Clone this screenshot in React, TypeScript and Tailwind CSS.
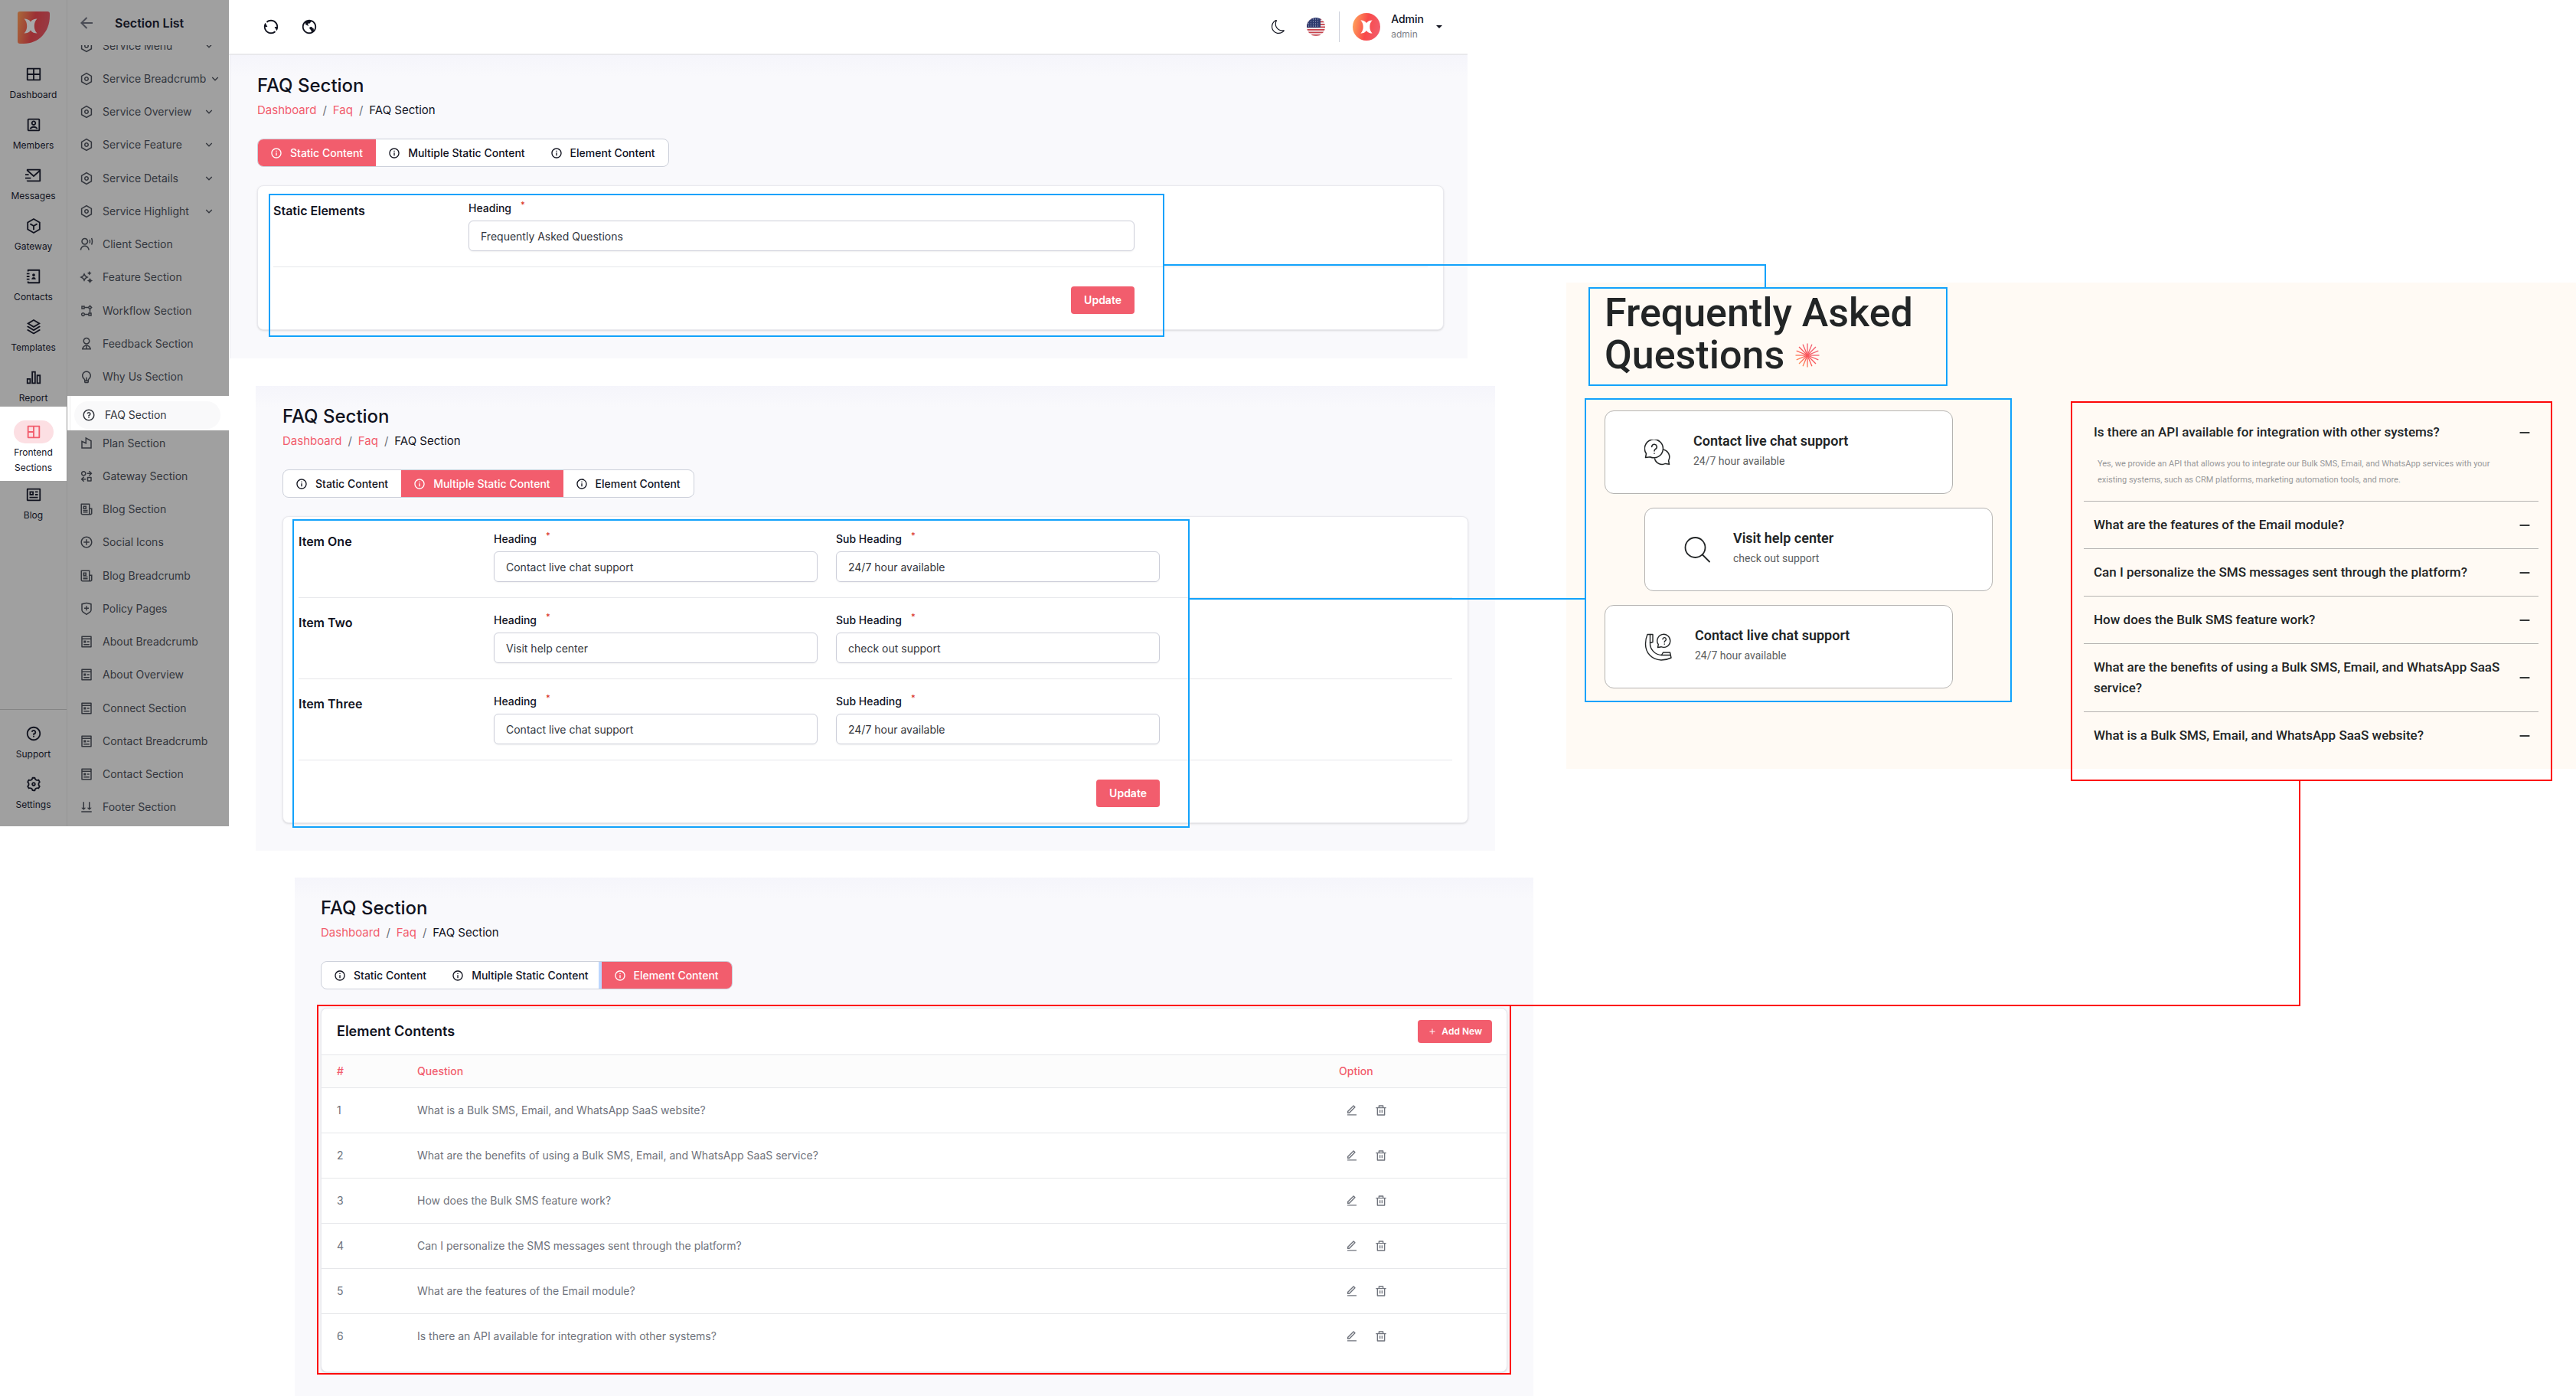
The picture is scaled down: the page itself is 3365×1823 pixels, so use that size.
import React from "react";
import type { IconType } from "react-icons";
import { BsMoon } from "react-icons/bs";
import {
  RiAccountBoxLine,
  RiAddCircleLine,
  RiAddLine,
  RiAlignBottom,
  RiArrowDownSLine,
  RiArrowLeftLine,
  RiBarChart2Line,
  RiBuilding3Line,
  RiContactsBook3Line,
  RiDeleteBinLine,
  RiEarthLine,
  RiEditLine,
  RiFlowChart,
  RiInformationLine,
  RiInstanceLine,
  RiLayout4Line,
  RiLayoutGridLine,
  RiLightbulbLine,
  RiMailSendLine,
  RiNewspaperLine,
  RiPagesLine,
  RiProfileLine,
  RiQuestionLine,
  RiRefreshLine,
  RiSettings3Line,
  RiSettingsLine,
  RiShieldCrossLine,
  RiSparkling2Line,
  RiStackLine,
  RiSubtractLine,
  RiSwap2Line,
  RiUser2Line,
  RiUserVoiceLine,
} from "react-icons/ri";
import clsx from "clsx";

type NavEntry = { label: string; icon: IconType; more?: boolean };

const railItems: NavEntry[] = [
  { label: "Dashboard", icon: RiLayoutGridLine },
  { label: "Members", icon: RiAccountBoxLine },
  { label: "Messages", icon: RiMailSendLine },
  { label: "Gateway", icon: RiInstanceLine },
  { label: "Contacts", icon: RiContactsBook3Line },
  { label: "Templates", icon: RiStackLine },
  { label: "Report", icon: RiBarChart2Line },
];

const sectionsAbove: NavEntry[] = [
  { label: "Service Menu", icon: RiSettingsLine, more: true },
  { label: "Service Breadcrumb", icon: RiSettingsLine, more: true },
  { label: "Service Overview", icon: RiSettingsLine, more: true },
  { label: "Service Feature", icon: RiSettingsLine, more: true },
  { label: "Service Details", icon: RiSettingsLine, more: true },
  { label: "Service Highlight", icon: RiSettingsLine, more: true },
  { label: "Client Section", icon: RiUserVoiceLine },
  { label: "Feature Section", icon: RiSparkling2Line },
  { label: "Workflow Section", icon: RiFlowChart },
  { label: "Feedback Section", icon: RiUser2Line },
  { label: "Why Us Section", icon: RiLightbulbLine },
];

const sectionsBelow: NavEntry[] = [
  { label: "Plan Section", icon: RiBuilding3Line },
  { label: "Gateway Section", icon: RiSwap2Line },
  { label: "Blog Section", icon: RiNewspaperLine },
  { label: "Social Icons", icon: RiAddCircleLine },
  { label: "Blog Breadcrumb", icon: RiNewspaperLine },
  { label: "Policy Pages", icon: RiShieldCrossLine },
  { label: "About Breadcrumb", icon: RiPagesLine },
  { label: "About Overview", icon: RiPagesLine },
  { label: "Connect Section", icon: RiPagesLine },
  { label: "Contact Breadcrumb", icon: RiPagesLine },
  { label: "Contact Section", icon: RiPagesLine },
  { label: "Footer Section", icon: RiAlignBottom },
];

const tabs = ["Static Content", "Multiple Static Content", "Element Content"];

const staticRows = [
  {
    title: "Static Elements",
    fields: [{ label: "Heading", value: "Frequently Asked Questions" }],
  },
];

const multipleRows = [
  {
    title: "Item One",
    fields: [
      { label: "Heading", value: "Contact live chat support" },
      { label: "Sub Heading", value: "24/7 hour available" },
    ],
  },
  {
    title: "Item Two",
    fields: [
      { label: "Heading", value: "Visit help center" },
      { label: "Sub Heading", value: "check out support" },
    ],
  },
  {
    title: "Item Three",
    fields: [
      { label: "Heading", value: "Contact live chat support" },
      { label: "Sub Heading", value: "24/7 hour available" },
    ],
  },
];

const questions = [
  "What is a Bulk SMS, Email, and WhatsApp SaaS website?",
  "What are the benefits of using a Bulk SMS, Email, and WhatsApp SaaS service?",
  "How does the Bulk SMS feature work?",
  "Can I personalize the SMS messages sent through the platform?",
  "What are the features of the Email module?",
  "Is there an API available for integration with other systems?",
];

const answer =
  "Yes, we provide an API that allows you to integrate our Bulk SMS, Email, and WhatsApp services with your existing systems, such as CRM platforms, marketing automation tools, and more.";

const XMark = () => (
  <path
    d="M-8.500 -9.500C-5 -9.500 -2 -8.500 0 -5.500C2 -8.500 5 -9.500 8.500 -9.500C6 -7 4.800 -4 4.800 0C4.800 4 6 7 8.500 9.500C5 9.500 2 8.500 0 5.500C-2 8.500 -5 9.500 -8.500 9.500C-6 7 -4.800 4 -4.800 0C-4.800 -4 -6 -7 -8.500 -9.500Z"
    fill="currentColor"
  />
);

const Logo = () => (
  <svg viewBox="0 0 42 42" className="size-[42px] text-[#a8a8a8]">
    <defs>
      <linearGradient id="logo" x1="0" x2="1" y1="0.3" y2="0.5">
        <stop offset="0" stopColor="#a8643a" />
        <stop offset="0.5" stopColor="#9c3034" />
        <stop offset="1" stopColor="#973b45" />
      </linearGradient>
    </defs>
    <path
      d="M3 0H39Q42 0 42 3V6C42 27 27 42 8 42H3Q0 42 0 39V3Q0 0 3 0Z"
      fill="url(#logo)"
    />
    <g transform="translate(17 19)">
      <XMark />
    </g>
  </svg>
);

const Avatar = () => (
  <svg viewBox="0 0 36 36" className="size-9 text-white">
    <defs>
      <linearGradient id="avatar" x1="0" x2="1" y1="0.4" y2="0.6">
        <stop offset="0" stopColor="#ff9f5a" />
        <stop offset="0.5" stopColor="#f94a4a" />
        <stop offset="1" stopColor="#f25d6d" />
      </linearGradient>
    </defs>
    <circle cx="18" cy="18" r="18" fill="url(#avatar)" />
    <g transform="translate(18 18) scale(.9)">
      <XMark />
    </g>
  </svg>
);

const Flag = () => (
  <svg viewBox="0 0 24 24" className="size-6">
    <clipPath id="flag">
      <circle cx="12" cy="12" r="12" />
    </clipPath>
    <g clipPath="url(#flag)">
      <rect width="24" height="24" fill="#f4f4f6" />
      {[1, 4.5, 8, 11.5, 15, 18.5, 22].map((y) => (
        <rect key={y} y={y} width="24" height="1.8" fill="#c8414b" />
      ))}
      <rect width="18" height="13" fill="#2e3a6e" />
      {[2, 5, 8, 11].map((y) => (
        <path
          key={y}
          d={`M2 ${y}H17`}
          stroke="#b9bed6"
          strokeWidth="1"
          strokeDasharray="1 2"
        />
      ))}
    </g>
  </svg>
);

const Burst = () => (
  <svg viewBox="-16 -16 32 32" className="size-8">
    <defs>
      <linearGradient
        id="burst"
        gradientUnits="userSpaceOnUse"
        x1="-14"
        x2="6"
        y1="12"
        y2="-6"
      >
        <stop offset="0" stopColor="#ff9a55" />
        <stop offset="0.6" stopColor="#fb5457" />
        <stop offset="1" stopColor="#f25d6d" />
      </linearGradient>
    </defs>
    {Array.from({ length: 16 }, (_, i) => {
      const a = (i * Math.PI) / 8;
      return (
        <line
          key={i}
          x1="0"
          y1="0"
          x2={15.5 * Math.cos(a)}
          y2={15.5 * Math.sin(a)}
          stroke="url(#burst)"
          strokeWidth="1.3"
        />
      );
    })}
  </svg>
);

const ChatIcon = () => (
  <svg
    viewBox="0 0 34 34"
    className="size-[34px]"
    fill="none"
    stroke="currentColor"
    strokeWidth="1.5"
    strokeLinecap="round"
    strokeLinejoin="round"
  >
    <path d="M1.500 23.500L2.500 18.500A12 12 0 1 1 7.500 22.700Z" />
    <path d="M9.700 9.500a3.300 3.300 0 1 1 4.800 3c-1.100.6-1.500 1.200-1.500 2.500M13 18v.3" />
    <path d="M25.500 13.200A10 10 0 0 1 31.600 27.500L32.500 32.300L27.500 31.400A10 10 0 0 1 13.500 25" />
  </svg>
);

const SearchIcon = () => (
  <svg
    viewBox="0 0 34 34"
    className="size-[34px]"
    fill="none"
    stroke="currentColor"
    strokeWidth="1.8"
    strokeLinecap="round"
  >
    <circle cx="14.500" cy="14" r="13" />
    <path d="M24 23.500L33 32.500" />
  </svg>
);

const PhoneIcon = () => (
  <svg
    viewBox="0 0 36 36"
    className="size-9"
    fill="none"
    stroke="currentColor"
    strokeWidth="1.4"
    strokeLinecap="round"
    strokeLinejoin="round"
  >
    <path d="M4 1.500H11V11.500L7.500 12.500C7 20 13 28 22.500 28.500L24.500 25H33.500L35 32C31 34 27 35 22 35C10 34.500 1.500 26 1.500 14C1.500 9 2.500 5 4 1.500Z" />
    <path d="M7.500 1.500V12.500M22.500 28.500L34 28.500" />
    <path d="M17.500 18.500L18.300 14.700A8.500 8.500 0 1 1 22 17.700Z" />
    <path d="M24 7.800a2.200 2.200 0 1 1 3.200 2c-.8.4-1 .8-1 1.700M26.200 14v.2" />
  </svg>
);

const RailItem = ({ item, active }: { item: NavEntry; active?: boolean }) => {
  const Icon = item.icon;
  return (
    <a href="#" className="flex flex-col items-center">
      <span
        className={clsx(
          "flex h-[30px] w-[52px] items-center justify-center rounded-full",
          active && "bg-[#fcdfe3] text-[#f25d6d]",
        )}
      >
        <Icon className="size-[22px]" />
      </span>
      <span className="mt-[2px] w-[70px] text-center text-xs leading-5">
        {item.label}
      </span>
    </a>
  );
};

const SectionItem = ({ item }: { item: NavEntry }) => {
  const Icon = item.icon;
  return (
    <a
      href="#"
      className="flex flex-1 items-center gap-3 pl-4 text-sm text-[#33363d]"
    >
      <Icon className="size-[18px] shrink-0" />
      <span className="flex items-center gap-1 whitespace-nowrap">
        <span className="min-w-[127px]">{item.label}</span>
        {item.more && <RiArrowDownSLine className="size-4 shrink-0" />}
      </span>
    </a>
  );
};

const Sidebar = () => (
  <aside className="flex min-h-[1079px] self-start text-[#11131f]">
    <nav className="flex w-[88px] flex-col border-r border-[#969696] bg-[#a0a0a0]">
      <div className="flex h-[82px] justify-center pt-[15px]">
        <Logo />
      </div>
      <div className="flex flex-col gap-[14px] pb-px">
        {railItems.map((item) => (
          <RailItem key={item.label} item={item} />
        ))}
      </div>
      <div className="bg-white pt-[18px] pb-[7px]">
        <RailItem
          active
          item={{ label: "Frontend Sections", icon: RiLayout4Line }}
        />
      </div>
      <div className="pt-[3px]">
        <RailItem item={{ label: "Blog", icon: RiProfileLine }} />
      </div>
      <div className="mt-auto flex flex-col gap-[14px] border-t border-[#858585] pt-4 pb-[18px]">
        <RailItem item={{ label: "Support", icon: RiQuestionLine }} />
        <RailItem item={{ label: "Settings", icon: RiSettings3Line }} />
      </div>
    </nav>
    <div className="flex flex-1 flex-col bg-[#a0a0a0]">
      <div className="flex h-[59px] items-center gap-[25px] pl-[13px]">
        <button type="button" aria-label="Back">
          <RiArrowLeftLine className="size-6 text-[#4a4c55]" />
        </button>
        <h2 className="text-base font-semibold">Section List</h2>
      </div>
      <div className="flex h-[458px] flex-col justify-end overflow-hidden pb-[3px]">
        <div className="flex h-[476px] shrink-0 flex-col">
          {sectionsAbove.map((item) => (
            <SectionItem key={item.label} item={item} />
          ))}
        </div>
      </div>
      <div className="bg-white pl-[3px]">
        <div className="border-l border-[#ececec] pt-[7px] pr-[11px] pb-[2px] pl-[5px]">
          <a
            href="#"
            className="flex h-9 items-center gap-3 rounded-full bg-[#f9f9fa] pl-[10px] text-sm text-[#33363d]"
          >
            <RiQuestionLine className="size-[18px]" />
            FAQ Section
          </a>
        </div>
      </div>
      <div className="-mt-[5px] flex flex-1 flex-col pb-[3px]">
        {sectionsBelow.map((item) => (
          <SectionItem key={item.label} item={item} />
        ))}
      </div>
    </div>
  </aside>
);

const Topbar = () => (
  <header className="mr-[129px] flex h-[72px] items-center border-b-2 border-[#e9e9ec] pr-[33px] pl-11 text-[#11131f]">
    <div className="flex items-center gap-7">
      <button type="button" aria-label="Refresh">
        <RiRefreshLine className="size-[22px]" />
      </button>
      <button type="button" aria-label="Visit site">
        <RiEarthLine className="size-[22px]" />
      </button>
    </div>
    <div className="ml-auto flex items-center">
      <button type="button" aria-label="Dark mode">
        <BsMoon className="size-[18px]" />
      </button>
      <button type="button" aria-label="Language" className="ml-7">
        <Flag />
      </button>
      <span className="ml-[18px] h-10 w-px bg-[#ccd0da]" />
      <button type="button" className="ml-[17px] flex items-center text-left">
        <Avatar />
        <span className="ml-[14px] flex flex-col">
          <span className="text-sm leading-5 font-medium">Admin</span>
          <span className="text-xs leading-5 text-[#7d8088]">admin</span>
        </span>
        <svg viewBox="0 0 8 4" className="ml-4 h-1 w-2" fill="currentColor">
          <path d="M0 0H8L4 4Z" />
        </svg>
      </button>
    </div>
  </header>
);

type PanelProps = {
  active: number;
  className?: string;
  children: React.ReactNode;
};

const Panel = ({ active, className, children }: PanelProps) => (
  <section
    className={clsx(
      "bg-[linear-gradient(#f5f5fb,#f9f9fc_28px)] pt-6 text-[#11131f]",
      className,
    )}
  >
    <h1 className="text-2xl font-medium">FAQ Section</h1>
    <nav className="mt-[6px] flex gap-2 text-[15px] leading-5">
      <a href="#" className="text-[#f25d6d]">
        Dashboard
      </a>
      <span className="text-[#6b7078]">/</span>
      <a href="#" className="text-[#f25d6d]">
        Faq
      </a>
      <span className="text-[#6b7078]">/</span>
      <span>FAQ Section</span>
    </nav>
    <div className="mt-[27px] flex h-[37px] w-fit overflow-hidden rounded-lg border border-[#ccd0da] bg-white text-sm font-medium">
      {tabs.map((tab, i) => (
        <button
          key={tab}
          type="button"
          className={clsx(
            "flex items-center gap-[10px] pr-[17px] pl-4",
            i === active && "bg-[#f25d6d] text-white",
            i === 2 && active === 2 && "shadow-[0_0_0_4px_#bcd7ff]",
          )}
        >
          <RiInformationLine className="size-4" />
          {tab}
        </button>
      ))}
    </div>
    {children}
  </section>
);

type FormCardProps = {
  id: string;
  rows: typeof staticRows;
};

const FormCard = ({ id, rows }: FormCardProps) => (
  <form className="mt-6 rounded-lg border border-[#e9e9ee] bg-white px-5 shadow-sm">
    {rows.map((row) => (
      <div
        key={row.title}
        className="flex border-b border-[#e6e7ea] pt-5 pb-5"
      >
        <h2 className="w-[255px] text-base font-semibold">{row.title}</h2>
        <div className="flex max-w-[870px] flex-1 gap-6">
          {row.fields.map((field) => {
            const fieldId = `${id}-${row.title}-${field.label}`.replace(
              / /g,
              "-",
            );
            return (
              <div key={field.label} className="flex-1">
                <label
                  htmlFor={fieldId}
                  className="flex gap-3 text-sm leading-[18px] font-medium"
                >
                  {field.label}
                  <span className="text-[11px] leading-2 text-[#d92d20]">
                    *
                  </span>
                </label>
                <input
                  id={fieldId}
                  defaultValue={field.value}
                  className="mt-[7px] h-10 w-full rounded-md border border-[#ccced9] px-[15px] text-sm text-[#33363d] shadow-xs"
                />
              </div>
            );
          })}
        </div>
      </div>
    ))}
    <div className="flex max-w-[1125px] justify-end pt-[25px] pb-5">
      <button
        type="button"
        className="h-9 rounded bg-[#f25d6d] px-[17px] text-sm font-semibold text-white"
      >
        Update
      </button>
    </div>
  </form>
);

const ElementCard = () => (
  <div className="mt-6 overflow-hidden rounded-lg border border-[#e9e9ee] bg-white pb-4 shadow-sm">
    <div className="flex h-[60px] items-center justify-between pr-[19px] pl-5">
      <h2 className="text-lg font-semibold">Element Contents</h2>
      <button
        type="button"
        className="flex h-[30px] items-center gap-[6px] rounded bg-[#f25d6d] px-[13px] text-xs font-semibold text-white"
      >
        <RiAddLine className="size-3" />
        Add New
      </button>
    </div>
    <table className="w-full table-fixed text-left text-sm text-[#6f737c]">
      <thead>
        <tr className="h-[43px] border-y border-[#e6e7ea] bg-[#fcfcfc] text-[#f25d6d]">
          <th className="w-[125px] pl-5 font-medium">#</th>
          <th className="font-medium">Question</th>
          <th className="w-[219px] font-medium">Option</th>
        </tr>
      </thead>
      <tbody>
        {questions.map((question, i) => (
          <tr
            key={question}
            className="h-[59px] border-b border-[#e6e7ea] last:border-b-0"
          >
            <td className="pl-5">{i + 1}</td>
            <td>{question}</td>
            <td>
              <div className="flex gap-[22px] pl-[9px]">
                <button type="button" aria-label="Edit">
                  <RiEditLine className="size-4" />
                </button>
                <button type="button" aria-label="Delete">
                  <RiDeleteBinLine className="size-4" />
                </button>
              </div>
            </td>
          </tr>
        ))}
      </tbody>
    </table>
  </div>
);

type SupportCardProps = {
  icon: React.ReactNode;
  title: string;
  text: string;
  className: string;
};

const SupportCard = ({ icon, title, text, className }: SupportCardProps) => (
  <div
    className={clsx(
      "flex h-[109px] items-center gap-[30px] rounded-xl border border-[#b5b3b1] bg-white pl-[51px]",
      className,
    )}
  >
    {icon}
    <div className="-mt-1">
      <h3 className="text-lg leading-[26px] font-semibold">{title}</h3>
      <p className="text-sm leading-[26px] text-[#5c5e61]">{text}</p>
    </div>
  </div>
);

const Preview = () => (
  <section className="mt-[369px] flex justify-between self-start bg-[#fffaf4] pr-[49px] pb-[13px] pl-[50px] font-[Roboto,sans-serif] text-[#222526]">
    <div className="max-w-[507px] flex-1 pt-3">
      <h2 className="text-[52px] leading-[55px] font-medium">
        Frequently Asked
        <br />
        <span className="flex items-center gap-[14px]">
          Questions
          <Burst />
        </span>
      </h2>
      <div className="mt-[45px] flex flex-col gap-[18px]">
        <SupportCard
          icon={<ChatIcon />}
          title="Contact live chat support"
          text="24/7 hour available"
          className="mr-[52px]"
        />
        <SupportCard
          icon={<SearchIcon />}
          title="Visit help center"
          text="check out support"
          className="ml-[52px]"
        />
        <SupportCard
          icon={<PhoneIcon />}
          title="Contact live chat support"
          text="24/7 hour available"
          className="mr-[52px]"
        />
      </div>
    </div>
    <div className="max-w-[594px] flex-1 pt-[165px]">
      {[...questions].reverse().map((question, i) => (
        <div
          key={question}
          className="border-b border-[#b5b3b1] py-[17px] pr-[7px] pl-[13px] last:border-b-0"
        >
          <button
            type="button"
            aria-expanded={i === 0}
            className="flex w-full items-center justify-between gap-4 text-left text-[17px] leading-[27px] font-medium"
          >
            {question}
            <RiSubtractLine className="size-[22px] shrink-0" />
          </button>
          {i === 0 && (
            <p className="pt-[17px] pr-[44px] pl-[5px] text-[11px] leading-[21px] text-[#97989a]">
              {answer}
            </p>
          )}
        </div>
      ))}
    </div>
  </section>
);

// Highlight frames and the lines that link each form to its place on the site.
const Annotations = () => (
  <svg
    viewBox="0 0 3365 1823"
    preserveAspectRatio="none"
    className="pointer-events-none absolute inset-0 size-full"
    fill="none"
    strokeWidth="2"
  >
    <g stroke="#12a2fb">
      <rect x="352" y="254" width="1168" height="185" />
      <rect x="383" y="679" width="1170" height="401" />
      <rect x="2076" y="376" width="467" height="127" />
      <rect x="2071" y="521" width="556" height="395" />
      <path d="M1520 346H2306V376" />
      <path d="M1553 782H2071" />
    </g>
    <g stroke="#fd0606">
      <rect x="415" y="1313" width="1558" height="481" />
      <rect x="2706" y="525" width="627" height="494" />
      <path d="M3004 1019V1313H1973" />
    </g>
  </svg>
);

export default function App() {
  return (
    <main className="relative grid min-h-screen grid-cols-[299px_minmax(0,1747fr)_minmax(0,1319fr)] bg-white font-[Inter,sans-serif]">
      <Sidebar />
      <div className="flex flex-col">
        <Topbar />
        <Panel
          active={0}
          className="mr-[129px] ml-px border-l border-[#ececf1] pr-[31px] pb-[37px] pl-[35px]"
        >
          <FormCard id="static" rows={staticRows} />
        </Panel>
        <Panel
          active={1}
          className="mt-9 mr-[93px] ml-[35px] px-[35px] pb-9"
        >
          <FormCard id="multiple" rows={multipleRows} />
        </Panel>
        <Panel
          active={2}
          className="mt-[35px] mr-[43px] ml-[86px] flex-1 px-[34px] pb-6"
        >
          <ElementCard />
        </Panel>
      </div>
      <Preview />
      <Annotations />
    </main>
  );
}
